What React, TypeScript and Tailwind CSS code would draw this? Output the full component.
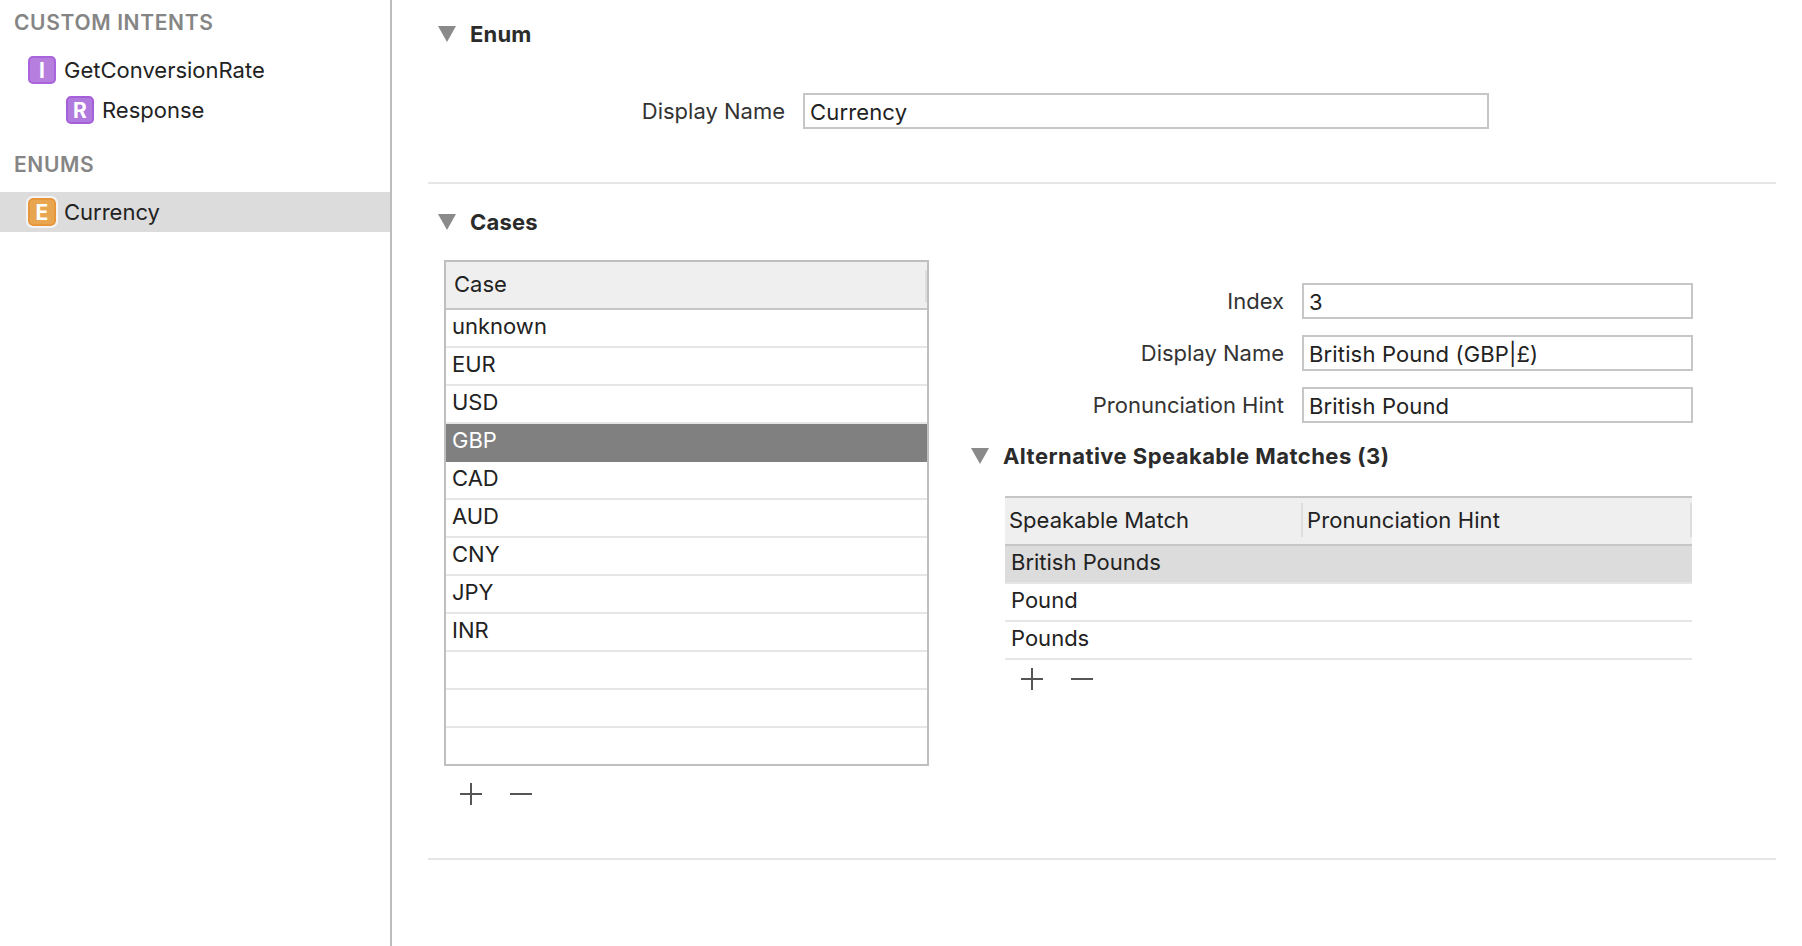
const rows = ["unknown", "EUR", "USD", "GBP", "CAD", "AUD", "CNY", "JPY", "INR", "", "", ""];
const matches = ["British Pounds", "Pound", "Pounds"];

const Triangle = () => (
  <svg width="18" height="16" viewBox="0 0 18 16" className="shrink-0">
    <polygon points="0,0 18,0 9,16" fill="#8a8a8a" />
  </svg>
);

const PlusMinus = () => (
  <div className="flex gap-[28px]">
    <svg width="22" height="22" viewBox="0 0 22 22">
      <path d="M11 0V22M0 11H22" stroke="#555" strokeWidth="2" />
    </svg>
    <svg width="22" height="22" viewBox="0 0 22 22">
      <path d="M0 11H22" stroke="#555" strokeWidth="2" />
    </svg>
  </div>
);

const Badge = ({ letter, className }: { letter: string; className: string }) => (
  <span
    className={`flex size-7 shrink-0 items-center justify-center rounded-[5px] border-2 text-[21px] leading-none font-bold text-white ${className}`}
  >
    {letter}
  </span>
);

const Field = ({ label, value, labelWidth, className = "" }: { label: string; value: string; labelWidth: string; className?: string }) => (
  <div className={`flex items-center ${className}`}>
    <span className={`shrink-0 text-right text-[22px] text-[#333] ${labelWidth}`}>{label}</span>
    <div className="ml-[18px] flex h-9 flex-1 items-center border-2 border-[#c6c6c6] pt-[2px] pl-[5px] text-[22px] tracking-[0.15px] text-[#222]">
      {value}
    </div>
  </div>
);

export default function App() {
  return (
    <div className="flex h-screen w-full overflow-hidden bg-white font-['Inter',sans-serif] text-[#222]">
      <aside className="w-[392px] shrink-0 border-r-2 border-[#bdbdbd]">
        <h2 className="mt-[9px] ml-[14px] h-[36px] text-[21px] leading-[28px] font-semibold tracking-[0.65px] text-[#858585]">
          CUSTOM INTENTS
        </h2>
        <div className="mt-[11px] flex h-7 items-center pl-7 text-[22px]">
          <Badge letter="I" className="border-[#a764dc] bg-[#b67fde]" />
          <span className="ml-2">GetConversionRate</span>
        </div>
        <div className="mt-3 flex h-7 items-center pl-[66px] text-[22px]">
          <Badge letter="R" className="border-[#a55fd9] bg-[#b17adf]" />
          <span className="ml-2">Response</span>
        </div>
        <h2 className="mt-[27px] ml-[14px] h-[28px] text-[21px] leading-[28px] font-semibold tracking-[0.65px] text-[#858585]">
          ENUMS
        </h2>
        <div className="mt-[13px] flex h-10 items-center bg-[#dcdcdc] pl-7 text-[22px]">
          <Badge letter="E" className="border-[#e8963b] bg-[#e9a651] outline-2 outline-[#f4f4f4]" />
          <span className="ml-2">Currency</span>
        </div>
      </aside>

      <main className="w-[1384px] pl-9">
        <section className="h-[184px] border-b-2 border-[#e6e6e6]">
          <div className="flex h-[68px] items-center pl-[10px]">
            <Triangle />
            <h3 className="ml-[14px] text-[22px] font-bold tracking-[0.2px] text-[#2b2b2b]">Enum</h3>
          </div>
          <Field label="Display Name" value="Currency" labelWidth="w-[357px]" className="mt-[25px] w-[1061px]" />
        </section>

        <div className="h-[676px] border-b-2 border-[#e6e6e6]">
          <div className="flex h-[76px] items-center pl-[10px]">
            <Triangle />
            <h3 className="ml-[14px] text-[22px] font-bold tracking-[0.2px] text-[#2b2b2b]">Cases</h3>
          </div>

          <div className="flex">
            <div className="ml-4 w-[485px]">
              <div className="border-2 border-[#bfbfbf]">
                <div className="relative flex h-[48px] items-center border-b-2 border-[#c6c6c6] bg-[#efefef] pb-[2px] pl-2 text-[22px]">
                  Case
                  <span className="absolute top-2 right-0 h-8 w-[2px] bg-[#dddddd]" />
                </div>
                {rows.map((row, i) => (
                  <div
                    key={i}
                    className={`flex h-[38px] items-center border-b-2 pb-[4px] pl-[6px] text-[22px] last:h-[36px] last:border-b-0 ${
                      row === "GBP" ? "border-[#808080] bg-[#808080] text-white" : "border-[#e6e6e6]"
                    }`}
                  >
                    {row}
                  </div>
                ))}
              </div>
              <div className="mt-[17px] ml-4">
                <PlusMinus />
              </div>
            </div>

            <div className="ml-[41px] w-[723px] pt-[23px]">
              <Field label="Index" value="3" labelWidth="w-[314px]" />
              <Field label="Display Name" value="British Pound (GBP|£)" labelWidth="w-[314px]" className="mt-4" />
              <Field label="Pronunciation Hint" value="British Pound" labelWidth="w-[314px]" className="mt-4" />

              <div className="mt-[13px] flex h-10 items-center pl-px">
                <Triangle />
                <h3 className="ml-[14px] text-[22px] font-bold tracking-[0.45px] text-[#2b2b2b]">
                  Alternative Speakable Matches (3)
                </h3>
              </div>

              <div className="mt-5 mr-px ml-[35px]">
                <div className="flex h-[50px] items-center border-y-2 border-[#c6c6c6] bg-[#efefef] pb-[2px] text-[22px]">
                  <span className="w-[296px] pl-1">Speakable Match</span>
                  <span className="h-[34px] w-[2px] bg-[#dddddd]" />
                  <span className="flex-1 pl-1 tracking-[0.1px]">Pronunciation Hint</span>
                  <span className="h-[34px] w-[2px] bg-[#dddddd]" />
                </div>
                {matches.map((match, i) => (
                  <div
                    key={match}
                    className={`flex h-[38px] items-center border-b-2 border-[#e6e6e6] pb-[4px] pl-[6px] text-[22px] ${
                      i === 0 ? "bg-[#dcdcdc]" : ""
                    }`}
                  >
                    {match}
                  </div>
                ))}
                <div className="mt-2 ml-4">
                  <PlusMinus />
                </div>
              </div>
            </div>
          </div>
        </div>
      </main>
    </div>
  );
}
